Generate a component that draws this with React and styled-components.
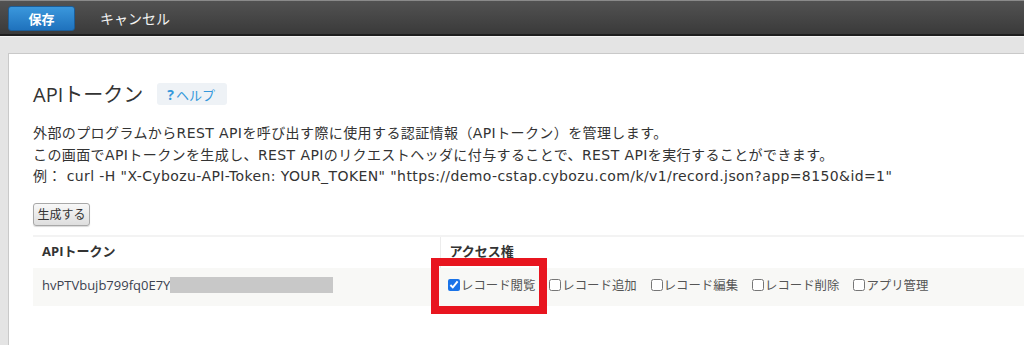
import React from 'react';
import styled, { createGlobalStyle } from 'styled-components';

const FONT = '"Open Sans", "Noto Sans CJK JP", sans-serif';
const WIDE_FONT = '"DejaVu Sans", "Noto Sans CJK JP", sans-serif';

const permissions = [
  { label: 'レコード閲覧', checked: true, marked: true },
  { label: 'レコード追加' },
  { label: 'レコード編集' },
  { label: 'レコード削除' },
  { label: 'アプリ管理' },
];

export default function App() {
  return (
    <>
      <GlobalStyle />
      <Toolbar>
        <SaveButton>保存</SaveButton>
        <CancelLink>キャンセル</CancelLink>
      </Toolbar>
      <Page>
        <Panel>
          <TitleRow>
            <Title>APIトークン</Title>
            <HelpBadge>
              <HelpMark>?</HelpMark>ヘルプ
            </HelpBadge>
          </TitleRow>
          <Description>
            外部のプログラムからREST APIを呼び出す際に使用する認証情報（APIトークン）を管理します。
            <br />
            この画面でAPIトークンを生成し、REST APIのリクエストヘッダに付与することで、REST APIを実行することができます。
            <br />
            例： curl -H "X-Cybozu-API-Token: YOUR_TOKEN" "https://demo-cstap.cybozu.com/k/v1/record.json?app=8150&amp;id=1"
          </Description>
          <GenerateButton>生成する</GenerateButton>
          <TokenTable>
            <thead>
              <tr>
                <HeadCell $width="407px">APIトークン</HeadCell>
                <HeadCell $divider>アクセス権</HeadCell>
              </tr>
            </thead>
            <tbody>
              <BodyRow>
                <BodyCell>
                  hvPTVbujb799fq0E7Y
                  <Redacted />
                </BodyCell>
                <BodyCell $tight>
                  <PermList>
                    {permissions.map((p) => (
                      <PermLabel key={p.label} $marked={p.marked}>
                        <Check type="checkbox" defaultChecked={!!p.checked} />
                        {p.label}
                      </PermLabel>
                    ))}
                  </PermList>
                </BodyCell>
              </BodyRow>
            </tbody>
          </TokenTable>
        </Panel>
      </Page>
    </>
  );
}

const GlobalStyle = createGlobalStyle`
  html, body {
    margin: 0;
    padding: 0;
    background: #e4e4e4;
    font-family: ${FONT};
    color: #333;
    overflow: hidden;
  }
`;

// 上部ツールバー
const Toolbar = styled.div`
  display: flex;
  align-items: center;
  padding: 0 8px;
  gap: 25px;
  background: linear-gradient(#525252, #3a3a3a);
  border-top: 1px solid #8a8a8a;
  border-bottom: 2px solid #1e1e1e;
  box-sizing: border-box;
  height: 36px;
`;

const SaveButton = styled.button`
  width: 67px;
  height: 25px;
  margin-top: 1px;
  border: 1px solid #1b5d98;
  border-radius: 3px;
  background: linear-gradient(#3a97dc, #1f72bd);
  color: #fff;
  font-family: ${FONT};
  font-size: 13px;
  font-weight: bold;
  padding: 0;
`;

const CancelLink = styled.span`
  color: #f2f2f2;
  font-size: 14px;
  margin-top: 1px;
`;

const Page = styled.div`
  padding: 16px 0 0 8px;
  border-top: 1px solid #f4f4f4;
`;

const Panel = styled.div`
  background: #fff;
  border-top: 1px solid #c9c9c9;
  border-left: 1px solid #c9c9c9;
  padding: 24px 0 60px 24px;
  min-height: 300px;
`;

const TitleRow = styled.div`
  display: flex;
  align-items: center;
  gap: 14px;
  height: 30px;
`;

const Title = styled.h1`
  margin: 0;
  font-size: 20px;
  font-weight: normal;
  color: #333;
`;

const HelpBadge = styled.span`
  display: inline-flex;
  align-items: center;
  height: 22px;
  padding: 0 12px 0 10px;
  background: #eef2f6;
  border-radius: 3px;
  color: #3498db;
  font-size: 13px;
  margin-top: 2px;
`;

const HelpMark = styled.b`
  font-size: 14px;
  margin-right: 2px;
`;

const Description = styled.p`
  margin: 15px 0 0;
  font-family: ${WIDE_FONT};
  font-size: 14px;
  letter-spacing: 0.4px;
  line-height: 21.5px;
  color: #333;
  white-space: nowrap;
`;

const GenerateButton = styled.button`
  display: block;
  margin-top: 15px;
  height: 23px;
  width: 57px;
  padding: 0;
  border: 1px solid #a8a8a8;
  border-radius: 3px;
  background: linear-gradient(#f8f8f8, #dedede);
  box-shadow: 0 1px 1px rgba(0, 0, 0, 0.15);
  font-family: ${FONT};
  font-size: 12px;
  color: #333;
`;

const TokenTable = styled.table`
  margin-top: 9px;
  border-collapse: collapse;
  width: 1000px;
`;

const HeadCell = styled.th`
  box-sizing: border-box;
  width: ${(p) => p.$width || 'auto'};
  height: 32px;
  padding: 0 0 4px 9px;
  text-align: left;
  font-size: 13px;
  font-weight: bold;
  color: #333;
  border-top: 2px solid #f3f3f3;
  border-left: ${(p) => (p.$divider ? '1px solid #ececec' : 'none')};
  vertical-align: middle;
`;

const BodyRow = styled.tr`
  background: #f8f8f6;
  height: 38px;
`;

const BodyCell = styled.td`
  padding: 0 0 4px ${(p) => (p.$tight ? '8px' : '9px')};
  font-size: 13px;
  color: #3b4250;
  vertical-align: middle;
  white-space: nowrap;
`;

const Redacted = styled.span`
  display: inline-block;
  width: 163px;
  height: 16px;
  background: #c8c8c8;
  vertical-align: -3px;
`;

const PermList = styled.div`
  display: flex;
  align-items: center;
  gap: 14px;
`;

const PermLabel = styled.label`
  position: relative;
  display: inline-flex;
  align-items: center;
  font-size: 12.4px;
  color: #555;

  &::after {
    content: '';
    display: ${(p) => (p.$marked ? 'block' : 'none')};
    position: absolute;
    left: -17px;
    top: -18px;
    width: 100px;
    height: 40px;
    border: 8px solid #e8151f;
  }
`;

const Check = styled.input`
  width: 12px;
  height: 12px;
  margin: 0 1px 0 0;
  accent-color: #1a73e8;
`;
